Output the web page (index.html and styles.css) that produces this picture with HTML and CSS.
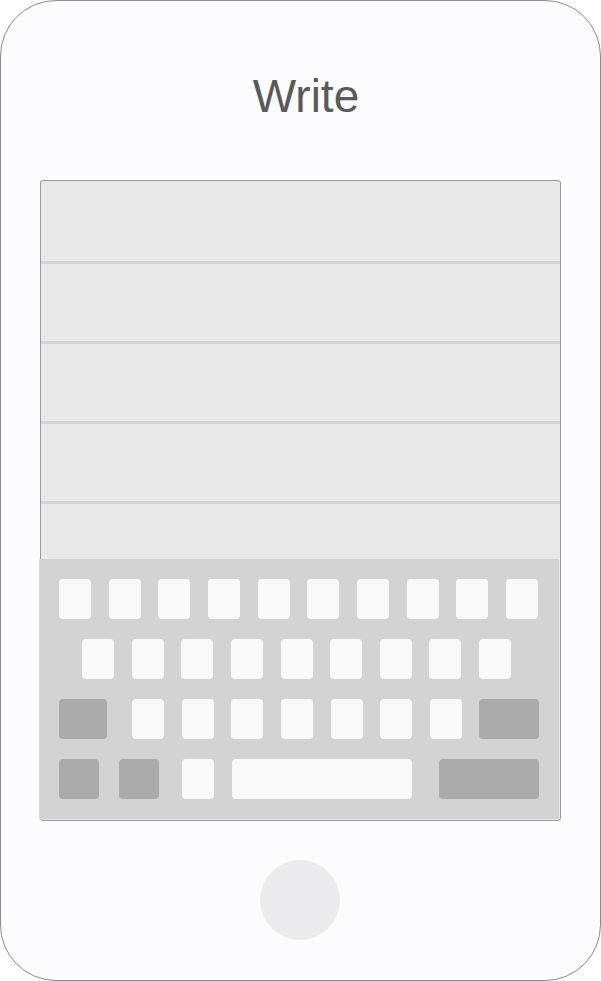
FILE: index.html
```html
<!DOCTYPE html>
<html lang="en">
<head>
<meta charset="utf-8">
<title>Write</title>
<link rel="stylesheet" href="styles.css">
</head>
<body>
<div class="phone">
  <h1 class="title">Write</h1>
  <div class="screen">
    <div class="line first"></div>
    <div class="line"></div>
    <div class="line"></div>
    <div class="line"></div>
    <div class="line last"></div>
    <div class="keyboard">
      <div class="row row1">
        <span class="key"></span><span class="key"></span><span class="key"></span><span class="key"></span><span class="key"></span>
        <span class="key"></span><span class="key"></span><span class="key"></span><span class="key"></span><span class="key"></span>
      </div>
      <div class="row row2">
        <span class="key"></span><span class="key"></span><span class="key"></span><span class="key"></span><span class="key"></span>
        <span class="key"></span><span class="key"></span><span class="key"></span><span class="key"></span>
      </div>
      <div class="row row3">
        <span class="key dark shift"></span>
        <div class="letters">
          <span class="key"></span><span class="key"></span><span class="key"></span><span class="key"></span>
          <span class="key"></span><span class="key"></span><span class="key"></span>
        </div>
        <span class="key dark back"></span>
      </div>
      <div class="row row4">
        <span class="key dark k40"></span>
        <span class="key dark k40 g20"></span>
        <span class="key g23"></span>
        <span class="key space"></span>
        <span class="key dark ret"></span>
      </div>
    </div>
  </div>
  <div class="home"></div>
</div>
</body>
</html>
```
FILE: styles.css
```css
html, body {
  margin: 0;
  padding: 0;
  background: #ffffff;
}

.phone {
  box-sizing: border-box;
  width: 601px;
  height: 981px;
  border: 1px solid #8c8c8c;
  border-radius: 56px;
  background: #fcfbfd;
  padding-top: 70px;
  overflow: hidden;
}

.title {
  margin: 0;
  padding-left: 11px;
  text-align: center;
  font-family: "Liberation Sans", Arial, sans-serif;
  font-weight: normal;
  font-size: 46px;
  line-height: 50px;
  color: #5a5a5a;
}

.screen {
  box-sizing: border-box;
  width: 521px;
  height: 641px;
  margin: 59px 0 0 39px;
  border: 1px solid #9a9a9a;
  border-radius: 3px;
  background: #e8e8e8;
}

.line {
  box-sizing: border-box;
  height: 80px;
  border-top: 3px solid #d3d2d8;
}

.line.first {
  border-top: 0;
  border-radius: 2px 2px 0 0;
}

.line.last {
  height: 58px;
}

.keyboard {
  box-sizing: border-box;
  width: 520px;
  height: 260px;
  margin-left: -2px;
  padding-top: 20px;
  background: #d3d3d3;
  display: flex;
  flex-direction: column;
  gap: 20px;
}

.row {
  display: flex;
  height: 40px;
}

.key {
  display: block;
  flex: none;
  width: 32px;
  height: 40px;
  border-radius: 4px;
  background: #f9f9f9;
}

.key.dark {
  background: #aaaaaa;
}

.row1 {
  width: 479px;
  margin-left: 20px;
  justify-content: space-between;
}

.row2 {
  width: 429px;
  margin-left: 43px;
  justify-content: space-between;
}

.row3 {
  margin-left: 20px;
}

.row3 .shift {
  width: 48px;
}

.row3 .letters {
  display: flex;
  justify-content: space-between;
  width: 330px;
  margin-left: 25px;
}

.row3 .back {
  width: 60px;
  margin-left: 17px;
}

.row4 {
  margin-left: 20px;
}

.k40 {
  width: 40px;
}

.g20 {
  margin-left: 20px;
}

.g23 {
  margin-left: 23px;
}

.space {
  width: 180px;
  margin-left: 18px;
}

.ret {
  width: 100px;
  margin-left: 27px;
}

.home {
  width: 80px;
  height: 80px;
  margin: 39px auto 0;
  border-radius: 50%;
  background: #ecebef;
  position: relative;
  left: -0.5px;
}
```
